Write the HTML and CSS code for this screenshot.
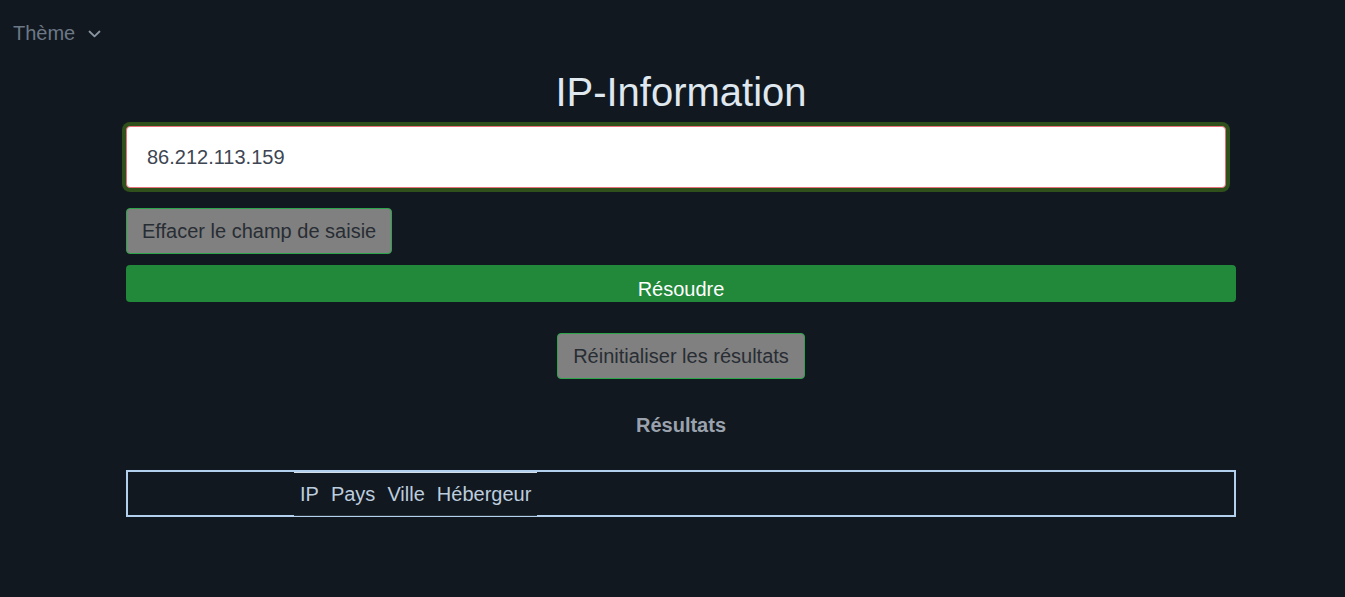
FILE: index.html
```html
<!DOCTYPE html>
<html lang="fr">
<head>
<meta charset="utf-8">
<title>IP-Information</title>
<link rel="stylesheet" href="styles.css">
</head>
<body>
<header class="topbar">
  <button class="theme-toggle">Thème
    <svg class="chev" width="13" height="8" viewBox="0 0 13 8"><path d="M1.5 1.5 L6.5 6.3 L11.5 1.5" fill="none" stroke="currentColor" stroke-width="1.8" stroke-linecap="round" stroke-linejoin="round"/></svg>
  </button>
</header>
<main class="container">
  <h1 class="title">IP-Information</h1>
  <div class="input-wrap">
    <input class="ip-input" type="text" value="86.212.113.159">
  </div>
  <div class="row-left">
    <button class="btn btn-gray">Effacer le champ de saisie</button>
  </div>
  <button class="btn-resolve">Résoudre</button>
  <div class="row-center">
    <button class="btn btn-gray">Réinitialiser les résultats</button>
  </div>
  <h2 class="results-title">Résultats</h2>
  <div class="results-box">
    <table class="results">
      <thead>
        <tr><th>IP</th><th>Pays</th><th>Ville</th><th>Hébergeur</th></tr>
      </thead>
    </table>
  </div>
</main>
</body>
</html>
```
FILE: styles.css
```css
html, body {
  margin: 0;
  padding: 0;
  background: #121820;
  font-family: "Liberation Sans", Arial, sans-serif;
}
.topbar {
  padding: 22px 0 0 13px;
  height: 24px;
}
.theme-toggle {
  background: none;
  border: 0;
  padding: 0;
  font-family: inherit;
  font-size: 20px;
  line-height: 22px;
  color: #6c7886;
  display: flex;
  align-items: center;
  gap: 13px;
}
.chev {
  color: #8a95a2;
  margin-top: 1px;
}
.container {
  margin-left: 126px;
  width: 1110px;
}
.title {
  margin: 22px 0 0 0;
  font-size: 40px;
  font-weight: 400;
  line-height: 48px;
  text-align: center;
  color: #dfe7ef;
}
.input-wrap {
  margin-top: 10px;
  width: 1100px;
}
.ip-input {
  display: block;
  box-sizing: border-box;
  width: 1100px;
  height: 62px;
  padding: 0 20px;
  font-family: inherit;
  font-size: 20px;
  color: #3d4652;
  background: #fff;
  border: 1px solid #e8707a;
  border-radius: 4px;
  box-shadow: 0 0 0 4px #2f4f1b;
  outline: none;
}
.row-left {
  margin-top: 20px;
}
.btn {
  box-sizing: border-box;
  height: 46px;
  padding: 0 15px;
  font-family: inherit;
  font-size: 20px;
  color: #282d34;
  background: #808080;
  border: 1px solid #2ea44a;
  border-radius: 4px;
}
.btn-resolve {
  display: block;
  box-sizing: border-box;
  margin-top: 11px;
  width: 1110px;
  height: 37px;
  padding: 11px 0 0 0;
  line-height: 24px;
  font-family: inherit;
  font-size: 20px;
  color: #ffffff;
  background: #22883a;
  border: 0;
  border-radius: 4px;
}
.row-center {
  margin-top: 31px;
  display: flex;
  justify-content: center;
}
.results-title {
  margin: 34px 0 0 0;
  font-size: 20px;
  line-height: 24px;
  font-weight: 700;
  text-align: center;
  color: #9aa3ad;
}
.results-box {
  box-sizing: border-box;
  margin-top: 33px;
  width: 1110px;
  height: 47px;
  border: 2px solid #b3d0ef;
  padding-left: 166px;
}
.results {
  border-collapse: collapse;
  border-top: 1px solid #d2dde8;
  border-bottom: 1px solid #2a323c;
}
.results th {
  font-weight: 400;
  font-size: 20px;
  line-height: 24px;
  color: #bccdde;
  padding: 9px 6px 9px 6px;
  text-align: left;
}
```
